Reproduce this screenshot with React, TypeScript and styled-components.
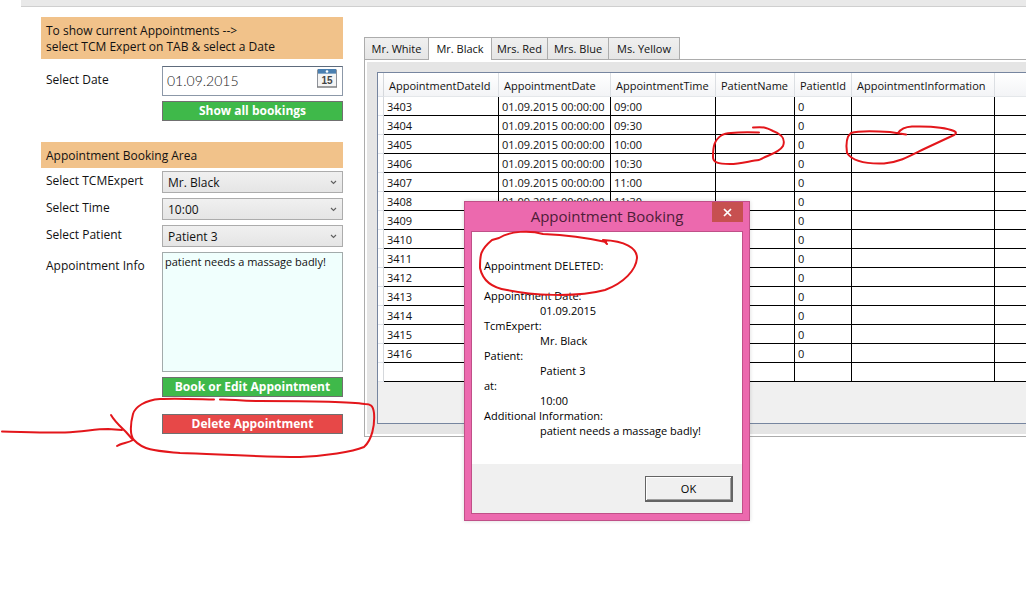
import React from "react";
import styled, { createGlobalStyle } from "styled-components";

const GlobalStyle = createGlobalStyle`
  * { box-sizing: border-box; }
  body {
    margin: 0;
    background: #fff;
    color: #111;
    font: 12px/16px "Open Sans", "Noto Sans", sans-serif;
  }
  button, input, select, textarea { font: inherit; color: inherit; margin: 0; border-radius: 0; }
`;

const Page = styled.div`
  position: relative;
  overflow: hidden;
  min-height: 100vh;
`;

const TopStrip = styled.header`
  height: 7px;
  margin-left: 21px;
  background: #e9e9e9;
  border-bottom: 1px solid #cfcfcf;
`;

const Columns = styled.main`
  display: flex;
  align-items: flex-start;
  gap: 21px;
  padding: 10px 0 0 41px;
`;

const Sidebar = styled.form`
  flex: none;
  width: 302px;
`;

const Banner = styled.h2`
  margin: 0;
  padding: 6px 5px 4px;
  background: #f1c28a;
  font-size: 12px;
  font-weight: 400;
  line-height: 16px;
`;

const Fields = styled.div<{ $top: number }>`
  display: grid;
  grid-template-columns: 116px 181px;
  row-gap: 5px;
  padding: ${(p) => p.$top}px 0 0 5px;
`;

const Label = styled.label<{ $drop?: number }>`
  padding-top: ${(p) => p.$drop ?? 2}px;
`;

const DateBox = styled.div`
  display: flex;
  justify-content: space-between;
  height: 30px;
  padding: 2px 5px 0 4px;
  border: 1px solid #8c98a8;
  border-top-color: #5e6b7c;
`;

const DateInput = styled.input`
  width: 110px;
  height: 22px;
  padding: 0;
  border: 0;
  outline: 0;
  background: none;
  font-family: Lato, sans-serif;
  font-size: 14px;
  font-weight: 300;
  color: #222;
`;

const IconButton = styled.button`
  width: 20px;
  height: 20px;
  padding: 0;
  border: 0;
  background: none;
`;

const ActionButton = styled.button<{ $tone: "green" | "red" }>`
  height: 20px;
  padding: 0;
  border: 1px solid #707070;
  background: ${(p) => (p.$tone === "green" ? "#3fb94a" : "#e74848")};
  color: #fff;
  font-weight: 700;
  line-height: 18px;
`;

const SelectWrap = styled.div`
  display: grid;
  align-items: center;
  height: 22px;
  > * { grid-area: 1 / 1; }
  > svg { justify-self: end; margin-right: 6px; pointer-events: none; }
`;

const Select = styled.select`
  appearance: none;
  width: 100%;
  height: 22px;
  padding: 1px 20px 0 5px;
  border: 1px solid #acacac;
  background: linear-gradient(#f0f0f0, #e5e5e5);
  line-height: 18px;
`;

const InfoText = styled.textarea`
  height: 120px;
  padding: 1px 2px;
  border: 1px solid #a3abab;
  background: #f0fffd;
  font-size: 11px;
  resize: none;
  outline: 0;
  overflow: hidden;
`;

const Buttons = styled.div<{ $top: number }>`
  display: grid;
  gap: 17px;
  padding: ${(p) => p.$top}px 0 0 121px;
`;

const BookingArea = styled.section`
  padding-top: 21px;
`;

const Schedule = styled.section`
  flex: 1;
  min-width: 0;
  padding-top: 20px;
  font-size: 11px;
`;

const Tabs = styled.div`
  display: flex;
  align-items: flex-start;
  height: 22px;
`;

const Tab = styled.button<{ $w: number; $active?: boolean }>`
  position: relative;
  width: ${(p) => p.$w}px;
  height: ${(p) => (p.$active ? 23 : 22)}px;
  margin-left: -1px;
  padding: 0;
  border: 1px solid #acacac;
  border-bottom: 0;
  background: ${(p) => (p.$active ? "#fff" : "linear-gradient(#f0f0f0, #e5e5e5)")};
  white-space: nowrap;
  &:first-child { margin-left: 0; }
`;

const Panel = styled.div`
  padding: 2px 0 2px 2px;
  border: 1px solid #acacac;
  border-right: 0;
`;

const PanelBody = styled.div`
  padding: 10px 0 10px 10px;
  background: #e5e5e5;
`;

const GridFrame = styled.div`
  min-height: 352px;
  border: 1px solid #76859f;
  border-right: 0;
  background: #f0f0f0;
`;

const Grid = styled.table`
  width: 100%;
  table-layout: fixed;
  border-collapse: separate;
  border-spacing: 0;
  line-height: 16px;
  white-space: nowrap;
  th {
    height: 24px;
    padding: 2px 0 0 5px;
    border-right: 1px solid #dcdfe3;
    border-bottom: 1px solid #e4e7ea;
    background: linear-gradient(#fff, #f3f4f6);
    font-weight: 400;
    text-align: left;
  }
  td {
    height: 19px;
    padding: 1px 0 0 3px;
    border-right: 1px solid #000;
    border-bottom: 1px solid #000;
    background: #fff;
  }
  th:first-child, td:first-child {
    padding: 0;
    border-right-color: #d5d8dc;
    border-bottom-color: #dfe3ea;
  }
  th:last-child, td:last-child { border-right: 0; }
`;

const Dialog = styled.div`
  position: absolute;
  left: 464px;
  top: 201px;
  width: 286px;
  height: 320px;
  padding: 0 6px 6px;
  display: flex;
  flex-direction: column;
  border: 1px solid #c05088;
  background: #ec69ae;
  box-shadow: 0 0 4px rgba(0, 0, 0, 0.15);
`;

const TitleBar = styled.div`
  position: relative;
  height: 29px;
  flex: none;
`;

const Title = styled.h1`
  margin: 0;
  padding-top: 3px;
  color: #4e1d38;
  font-size: 15px;
  font-weight: 400;
  line-height: 22px;
  text-align: center;
`;

const Close = styled.button`
  position: absolute;
  top: 0;
  right: 0;
  width: 31px;
  height: 20px;
  padding: 0;
  display: grid;
  place-items: center;
  border: 0;
  background: #c75050;
`;

const Client = styled.div`
  flex: 1;
  display: flex;
  flex-direction: column;
  border: 1px solid #c05088;
  background: #fff;
  color: #000;
  font-size: 11px;
`;

const Message = styled.div`
  flex: 1;
  padding: 26px 12px 0;
  line-height: 15px;
  p { margin: 0 0 15px; }
  dl, dd, dt { margin: 0; }
  dd { padding-left: 56px; }
`;

const Footer = styled.div`
  display: flex;
  justify-content: flex-end;
  height: 49px;
  padding: 12px 9px 0;
  background: #f0f0f0;
`;

const OkButton = styled.button`
  width: 88px;
  height: 26px;
  padding: 0;
  border: 1px solid #646464;
  border-width: 1px 2px 2px 1px;
  background: #f0f0f0;
  box-shadow: inset 1px 1px #fff, inset -1px -1px #a0a0a0;
`;

const Scribbles = styled.svg`
  position: absolute;
  left: 0;
  top: 0;
  pointer-events: none;
`;

const Chevron = () => (
  <svg width="7" height="5" viewBox="0 0 7 5" aria-hidden="true">
    <path d="M1 1 L3.5 3.5 L6 1" fill="none" stroke="#606060" strokeWidth="1.1" />
  </svg>
);

const CalendarIcon = () => (
  <svg width="20" height="20" viewBox="0 0 20 20" aria-hidden="true">
    <rect x="0.5" y="1" width="19" height="17" fill="#f4f4f4" stroke="#8e9299" />
    <rect x="1" y="0" width="18" height="5" fill="#4a7fb0" />
    <rect x="1" y="4" width="18" height="1" fill="#86a9c8" />
    <circle cx="10" cy="2.5" r="1.3" fill="#fff" />
    <path d="M0 18 H20" stroke="#777" />
    <text x="10" y="15" textAnchor="middle" fontFamily="Liberation Sans, sans-serif" fontSize="10" fontWeight="700" fill="#444">15</text>
  </svg>
);

const columns = [
  ["AppointmentDateId", 115],
  ["AppointmentDate", 112],
  ["AppointmentTime", 105],
  ["PatientName", 79],
  ["PatientId", 57],
  ["AppointmentInformation", 143],
] as const;

const times = ["09:00", "09:30", "10:00", "10:30", "11:00", "11:30", "12:00", "12:30", "13:00", "13:30", "14:00", "14:30", "15:00", "15:30"];

const tabs = [
  ["Mr. White", 65],
  ["Mr. Black", 64],
  ["Mrs. Red", 57],
  ["Mrs. Blue", 62],
  ["Ms. Yellow", 72],
] as const;

const choices = [
  ["expert", "Select TCMExpert", "Mr. Black"],
  ["time", "Select Time", "10:00"],
  ["patient", "Select Patient", "Patient 3"],
];

const details = [
  ["Appointment Date:", "01.09.2015"],
  ["TcmExpert:", "Mr. Black"],
  ["Patient:", "Patient 3"],
  ["at:", "10:00"],
  ["Additional Information:", "patient needs a massage badly!"],
];

export default function App() {
  return (
    <Page>
      <GlobalStyle />
      <TopStrip />
      <Columns>
        <Sidebar onSubmit={(e) => e.preventDefault()}>
          <Banner>
            To show current Appointments --&gt;
            <br />
            select TCM Expert on TAB &amp; select a Date
          </Banner>
          <Fields $top={7}>
            <Label htmlFor="date" $drop={6}>Select Date</Label>
            <DateBox>
              <DateInput id="date" defaultValue="01.09.2015" />
              <IconButton type="button" aria-label="Open calendar">
                <CalendarIcon />
              </IconButton>
            </DateBox>
          </Fields>
          <Buttons $top={5}>
            <ActionButton type="button" $tone="green">Show all bookings</ActionButton>
          </Buttons>
          <BookingArea>
            <Banner>Appointment Booking Area</Banner>
            <Fields $top={3}>
              {choices.map(([id, label, value]) => (
                <React.Fragment key={id}>
                  <Label htmlFor={id}>{label}</Label>
                  <SelectWrap>
                    <Select id={id} defaultValue={value}>
                      <option>{value}</option>
                    </Select>
                    <Chevron />
                  </SelectWrap>
                </React.Fragment>
              ))}
              <Label htmlFor="info" $drop={6}>Appointment Info</Label>
              <InfoText id="info" defaultValue="patient needs a massage badly!" />
            </Fields>
            <Buttons $top={5}>
              <ActionButton type="button" $tone="green">Book or Edit Appointment</ActionButton>
              <ActionButton type="button" $tone="red">Delete Appointment</ActionButton>
            </Buttons>
          </BookingArea>
        </Sidebar>

        <Schedule>
          <Tabs role="tablist">
            {tabs.map(([name, w]) => (
              <Tab key={name} type="button" role="tab" $w={w} $active={name === "Mr. Black"} aria-selected={name === "Mr. Black"}>
                {name}
              </Tab>
            ))}
          </Tabs>
          <Panel>
            <PanelBody>
              <GridFrame>
                <Grid>
                  <colgroup>
                    <col width={6} />
                    {columns.map(([name, w]) => (
                      <col key={name} width={w} />
                    ))}
                    <col />
                  </colgroup>
                  <thead>
                    <tr>
                      <th />
                      {columns.map(([name]) => (
                        <th key={name} scope="col">{name}</th>
                      ))}
                      <th />
                    </tr>
                  </thead>
                  <tbody>
                    {times.map((time, i) => (
                      <tr key={time}>
                        <td />
                        <td>{3403 + i}</td>
                        <td>01.09.2015 00:00:00</td>
                        <td>{time}</td>
                        <td />
                        <td>0</td>
                        <td />
                        <td />
                      </tr>
                    ))}
                    <tr>
                      {Array.from({ length: 8 }, (_, i) => (
                        <td key={i} />
                      ))}
                    </tr>
                  </tbody>
                </Grid>
              </GridFrame>
            </PanelBody>
          </Panel>
        </Schedule>
      </Columns>

      <Dialog role="dialog" aria-labelledby="dialog-title">
        <TitleBar>
          <Title id="dialog-title">Appointment Booking</Title>
          <Close type="button" aria-label="Close">
            <svg width="9" height="9" viewBox="0 0 9 9" aria-hidden="true">
              <path d="M1 1 L8 8 M8 1 L1 8" stroke="#fff" strokeWidth="1.7" />
            </svg>
          </Close>
        </TitleBar>
        <Client>
          <Message>
            <p>Appointment DELETED:</p>
            <dl>
              {details.map(([term, value]) => (
                <React.Fragment key={term}>
                  <dt>{term}</dt>
                  <dd>{value}</dd>
                </React.Fragment>
              ))}
            </dl>
          </Message>
          <Footer>
            <OkButton type="button">OK</OkButton>
          </Footer>
        </Client>
      </Dialog>

      <Scribbles width="1026" height="593" viewBox="0 0 1026 593" fill="none" stroke="#e3161b" strokeWidth="2" strokeLinecap="round" strokeLinejoin="round" aria-hidden="true">
        <path d="M2 431.500 C25 432 45 433 65 432.500 C85 431.500 95 429 108 429 L122 430" />
        <path d="M111 415 C115 422 121 427 126 432 L133 440 C128 443 121 443 117 446" />
        <path d="M214 399.500 C195 399 175 398 160 399 C145 400 135 407 133 414 C130 425 130 436 134 440 C144 451 158 451 180 453 C215 454 255 457 300 457 C325 456 352 452 364 447 C372 440 375 425 374 413 C373 405 370 404 365 404 C345 401 300 401 260 401 C240 401 230 399 220 399.500" />
        <path d="M759 132.500 C742 132 728 132 722 135 C714 140 713 147 713 157 C713 162 717 164 730 164 C740 164 750 161 759 160 C768 155 779 153 783 146 C786 138 781 134 773 131 C765 127 764 127 753 127.500" />
        <path d="M906 134.500 L890 132 C875 131 857 131 851 133 C846 137 846 146 847 153 C853 162 870 164 884 163.500 C900 162 910 156 924 149 L954 135 Q958 133 954 131 C945 127 930 126 912 126.500 C904 127 900 130 898 133" />
        <path d="M607 244 L603 240 C625 241 637 248 637 258 C636 270 624 283 605 290 C575 298 530 295 507 290 C493 288 483 282 480 268 C480 255 480 250 492 240 L499 238 C510 231 530 230 543 234 C565 235 588 238 606 242" />
      </Scribbles>
    </Page>
  );
}
